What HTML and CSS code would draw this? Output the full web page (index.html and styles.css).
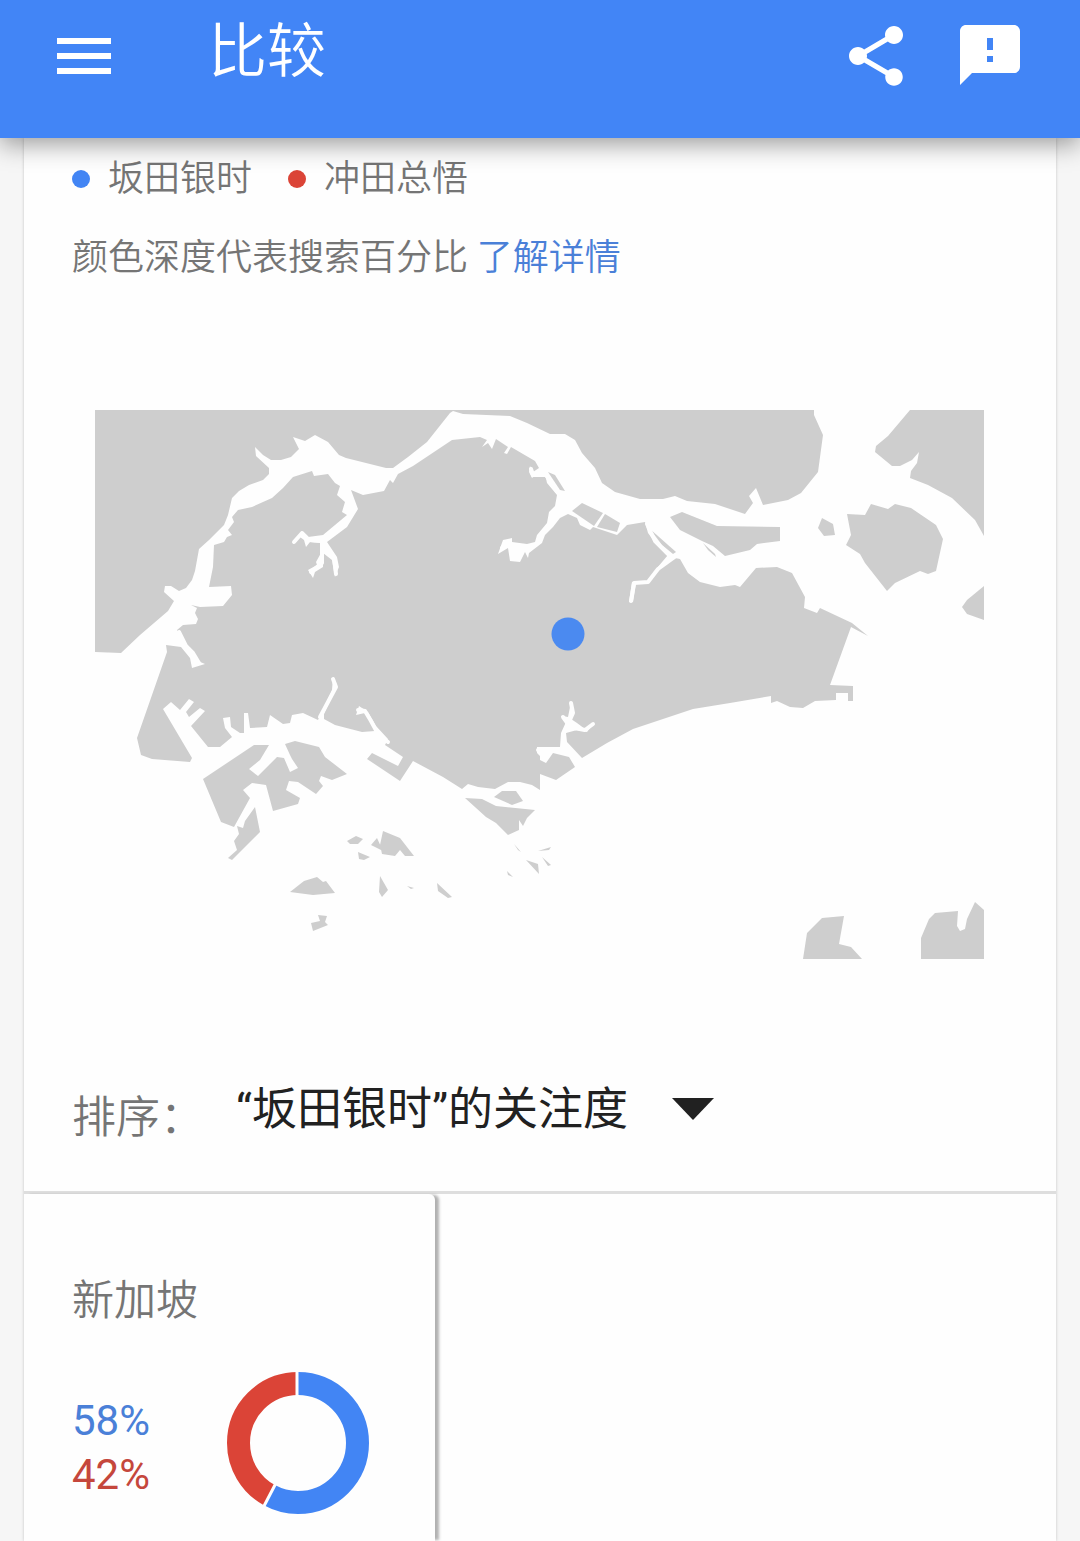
FILE: index.html
```html
<!DOCTYPE html>
<html lang="zh-CN">
<head>
<meta charset="utf-8">
<meta name="viewport" content="width=device-width, initial-scale=1">
<title>比较</title>
<link rel="stylesheet" href="styles.css">
</head>
<body>
<header class="app-bar">
  <button class="icon-button" type="button" aria-label="菜单">
    <svg class="icon" viewBox="0 0 24 24"><path d="M3 18h18v-2H3v2zm0-5h18v-2H3v2zm0-7v2h18V6H3z"/></svg>
  </button>
  <h1 class="app-title">比较</h1>
  <div class="app-actions">
    <button class="icon-button" type="button" aria-label="分享">
      <svg class="icon" viewBox="0 0 24 24"><path d="M18 16.08c-.76 0-1.44.3-1.96.77L8.91 12.7c.05-.23.09-.46.09-.7s-.04-.47-.09-.7l7.05-4.11c.54.5 1.25.81 2.04.81 1.66 0 3-1.34 3-3s-1.34-3-3-3-3 1.34-3 3c0 .24.04.47.09.7L8.04 9.81C7.5 9.31 6.79 9 6 9c-1.66 0-3 1.34-3 3s1.34 3 3 3c.79 0 1.5-.31 2.04-.81l7.12 4.16c-.05.21-.08.43-.08.65 0 1.61 1.31 2.92 2.92 2.92s2.92-1.31 2.92-2.92-1.31-2.92-2.92-2.92z"/></svg>
    </button>
    <button class="icon-button" type="button" aria-label="反馈">
      <svg class="icon" viewBox="0 0 24 24"><path d="M20 1.700H4c-1.100 0-2 .9-2 2V21.700l4-4h14c1.100 0 2-.9 2-2v-12c0-1.100-.9-2-2-2zM13 14h-2v-2h2v2zm0-4h-2V6h2v4z" fill-rule="evenodd"/></svg>
    </button>
  </div>
</header>

<main class="card">
  <section class="overview">
    <ul class="legend">
      <li class="legend-item"><span class="dot dot-blue"></span>坂田银时</li>
      <li class="legend-item"><span class="dot dot-red"></span>冲田总悟</li>
    </ul>
    <p class="note">颜色深度代表搜索百分比 <a class="note-link" href="#details">了解详情</a></p>
    <svg class="map" viewBox="95 410 890 549" role="img" aria-label="新加坡地图">
      <g class="land">
        <!-- Johor, north of the strait -->
        <path d="M95 410V652L121 653 140 635 168 611 174 601 164 592 165 586 171 586 179 591 186 588 192 580 195 571 199 549 209 540 224 525 228 515 232 498 239 491 249 485 263 480 269 474 269 468 256 456 255 447 263 455 271 460 281 460 291 457 299 449 293 437 305 441 315 435 328 442 339 455 346 458 366 463 386 468 393 468 408 457 427 442 450 413 453 411 463 414 510 416 527 423 550 434 565 434 575 440 582 453 595 468 602 483 615 492 640 499 663 499 675 496 687 501 715 504 745 514 753 503 749 496 756 488 763 505 788 500 801 493 818 472 823 435 814 415V410Z"/>
        <!-- Main island -->
        <path d="M209 587L213 567 214 545 224 542 227 537 232 535 228 530 234 522 232 517 238 510 252 507 272 498 283 488 293 477 312 471 314 476 328 474 335 483 340 486 337 495 345 502 342 512 347 515 323 535 308 537 302 531 293 543 300 537 304 540 306 547 310 542 320 543 321 553 316 562 317 565 308 570 313 578 315 572 323 567 323 553 332 560 335 577 339 567 337 557 327 542 347 527 358 509 351 490 363 495 384 491 390 480 393 483 398 474 413 466 452 440 480 437 487 440 482 447 488 443 492 449 496 439 508 447 504 453 507 454 511 447 535 461 539 468 533 472 530 466 529 472 532 478 537 474 545 474 547 483 557 495 555 506 549 512 547 523 537 535 535 542 527 544 512 542 512 538 503 540 498 554 508 548 510 561 520 562 525 552 528 558 529 553 542 543 545 535 553 527 560 518 568 514 577 518 580 525 590 530 593 527 617 535 627 525 645 522 648 533 657 545 668 555 657 568 647 582 632 582 629 602 633 602 636 584 649 583 658 570 675 558 680 559 688 573 700 582 720 587 735 585 740 587 756 568 777 567 792 573 805 597 804 608 817 613 820 608 852 623 868 636 851 627 830 685 853 686V701H848V693H836V700L815 701 803 708 790 707 777 701 771 703V696L730 703 693 709 633 729 607 743 582 758 567 742 566 733 577 730 587 732 594 723 585 729 577 723 571 719 573 713 571 702 568 717 562 716 566 722 561 733 560 747 537 747 537 753 540 756V790L532 785 520 782 508 782 495 789 478 787 468 784 462 789 443 777 413 761 400 781 367 759 372 753 398 766 403 757 385 745 388 739 376 726 368 712 359 706 356 715 365 713 375 731 362 732 335 725 324 719 324 714 337 685 333 677 332 690 318 720 303 713 292 715 290 723 283 724 270 715 267 727 250 728 248 713H244V733L240 733 231 727 230 717 223 718 225 728 232 737 220 747 208 747 191 726 205 711 200 708 189 717 186 712 194 702 189 699 180 710 171 702 163 709 192 758 190 762 152 759 141 755 137 738 167 652 166 645 181 647 190 658 192 668 205 664 198 661 192 652 185 645 177 630 183 625 196 624 198 619 195 613 197 608 191 605 200 607 223 606 232 595 231 586Z"/>
        <!-- Islands in the northern and eastern straits -->
        <path d="M572 511L582 503 603 513 594 526Z"/>
        <path d="M605 514L620 523 617 532 597 527Z"/>
        <path d="M548 472L555 475 565 491 560 490Z"/>
        <path d="M650 529L676 552 673 554 662 545Z"/>
        <path d="M670 517L682 512 717 526 780 527V541L757 544 750 550 725 556 713 546 702 541 680 530Z"/>
        <path d="M703 543L715 554 716 557 708 550Z"/>
        <path d="M822 518L833 524 835 535 824 536 818 528Z"/>
        <path d="M847 514L865 515 871 504 888 509 895 504 911 508 936 525 943 539 936 571 928 574 920 571 895 583 887 591 865 563 860 554 846 545 851 535Z"/>
        <path d="M910 410H984V536L975 520 952 498 928 485 910 478 911 471 917 463 919 452 912 460 900 466 892 466 875 452 876 446 888 436Z"/>
        <path d="M984 586V620L967 614 962 607 967 600Z"/>
        <!-- Jurong and the south-western islands -->
        <path d="M203 779L254 745 269 745 260 760 249 769 258 776 277 757 284 758 290 772 298 768 292 759 290 755 285 744 295 741 319 747 325 757 347 774 332 780 321 776 319 781 323 786 316 794 298 782 289 781 286 790 300 798 298 804 273 811 266 785 252 783 243 790 250 798 234 827 221 822Z"/>
        <path d="M255 807L260 832 232 860 228 858 237 850 234 841 239 834 237 826 243 828 245 821Z"/>
        <path d="M540 760L546 763 553 753 569 757 575 767 556 780 540 774Z"/>
        <path d="M494 797L502 791 516 791 523 801 512 805Z"/>
        <path d="M465 798L482 799 496 806 535 810 527 818 523 826 519 820 519 830 508 835 496 823 486 817Z"/>
        <path d="M347 841L356 836 363 839 358 844 350 844Z"/>
        <path d="M358 852L370 857 364 860 359 859ZM377 838L383 851 371 845ZM383 831L400 838 414 856 405 856 400 850 395 856 382 854 380 845Z"/>
        <path d="M290 892L304 881 317 877 323 882 326 881 335 893 313 895Z"/>
        <path d="M318 915L327 916 325 922 328 925 313 931 311 923 320 921Z"/>
        <path d="M380 876L388 890 382 897 379 892ZM407 886L414 888 411 889ZM437 883L452 897 448 898 438 891Z"/>
        <path d="M514 844L521 852 518 850ZM526 860L538 864 539 874ZM542 857L551 865 548 866ZM538 851L551 847 549 850ZM507 871L513 877 508 875Z"/>
        <!-- Batam shoreline -->
        <path d="M803 959L807 933 822 918 844 916 839 944 851 947 862 959Z"/>
        <path d="M921 959V938L929 919 935 913 958 911 957 926 960 931 965 929 967 919 975 902 984 910V959Z"/>
      </g>
      <!-- Rivers and reservoirs -->
      <g class="water">
        <path d="M647 524L655 541 669 555M676 556L658 569 648 582 634 583 631 601"/>
        <path d="M571 703L573 713 569 722M563 717L568 724 564 733 563 745 573 758M593 724L585 730 574 728"/>
        <path d="M538 750H560"/>
        <path d="M333 679L336 687 328 702 320 717"/>
        <path d="M358 710L365 711 371 721 378 734 388 742"/>
        <path d="M179 632L186 646 193 653 199 663"/>
        <path d="M294 542L302 533 309 540 322 541 322 563 311 572M324 548L334 558 336 574"/>
        <path d="M502 548L506 542 516 549 526 549M531 469L533 475 546 475 557 491"/>
      </g>
      <circle class="marker" cx="568" cy="634" r="16.5"/>
    </svg>
    <div class="sort">
      <label class="sort-label" for="sort-by">排序：</label>
      <div class="sort-field">
        <select class="sort-select" id="sort-by">
          <option>“坂田银时”的关注度</option>
          <option>“冲田总悟”的关注度</option>
        </select>
        <svg class="sort-arrow" viewBox="0 0 42 22" aria-hidden="true"><path d="M0 0H42L21 22Z"/></svg>
      </div>
    </div>
  </section>

  <section class="regions">
    <article class="region">
      <h2 class="region-name">新加坡</h2>
      <div class="region-data">
        <div class="shares">
          <span class="share-blue">58%</span>
          <span class="share-red">42%</span>
        </div>
        <svg class="donut" viewBox="0 0 144 144" role="img" aria-label="58% 与 42%">
          <circle class="ring ring-blue" cx="72" cy="72" r="59.5" pathLength="100" stroke-dasharray="58 42" transform="rotate(-90 72 72)"/>
          <circle class="ring ring-red" cx="72" cy="72" r="59.5" pathLength="100" stroke-dasharray="42 58" stroke-dashoffset="-58" transform="rotate(-90 72 72)"/>
          <path class="gap" d="M71 0V25M37 137L50 112"/>
        </svg>
      </div>
    </article>
  </section>
</main>
</body>
</html>
```

FILE: styles.css
```css
* {
  box-sizing: border-box;
}

body {
  display: flex;
  flex-direction: column;
  min-height: 100vh;
  margin: 0;
  background: #f6f6f6;
  color: #757575;
  font-family: Roboto, "Noto Sans CJK SC", sans-serif;
  font-weight: 350;
}

.app-bar {
  position: relative;
  z-index: 1;
  display: flex;
  align-items: flex-start;
  height: 138px;
  padding: 20px 54px 0 48px;
  background: #4285f6;
  box-shadow: 0 6px 24px rgba(0, 0, 0, 0.4);
  color: #fff;
}

.icon-button {
  display: block;
  width: 72px;
  height: 72px;
  padding: 0;
  border: 0;
  background: none;
  color: inherit;
}

.icon {
  display: block;
  width: 100%;
  height: 100%;
  fill: currentColor;
}

.app-title {
  flex: 1;
  margin: 0 0 0 88px;
  font-size: 59px;
  font-weight: inherit;
  line-height: 63px;
}

.app-actions {
  display: flex;
  gap: 42px;
}

.card {
  display: flex;
  flex: 1;
  flex-direction: column;
  margin: 0 24px;
  background: #fefefe;
  box-shadow: 0 0 3px rgba(0, 0, 0, 0.2);
}

.overview {
  padding: 17px 48px 40px;
  border-bottom: 3px solid #dedede;
}

.legend {
  display: flex;
  gap: 36px;
  margin: 0;
  padding: 0;
  list-style: none;
  font-size: 36px;
  line-height: 48px;
}

.legend-item {
  display: flex;
  align-items: center;
  gap: 18px;
}

.dot {
  width: 18px;
  height: 18px;
  border-radius: 50%;
}

.dot-blue {
  background: #4285f4;
}

.dot-red {
  background: #db4437;
}

.note {
  margin: 31px 0 0;
  font-size: 36px;
  line-height: 48px;
}

.note-link {
  color: #4a80d8;
  text-decoration: none;
}

.map {
  display: block;
  width: calc(100% - 46px);
  margin: 128px 23px 0;
}

.land {
  fill: #cecece;
}

.water {
  fill: none;
  stroke: #fefefe;
  stroke-width: 4;
  stroke-linecap: round;
  stroke-linejoin: round;
}

.marker {
  fill: #4b8af0;
}

.sort {
  display: flex;
  gap: 32px;
  margin-top: 118px;
}

.sort-label {
  padding-top: 8px;
  font-size: 44px;
  line-height: 66px;
}

.sort-field {
  position: relative;
}

.sort-select {
  appearance: none;
  display: block;
  height: 66px;
  padding: 0 86px 0 0;
  border: 0;
  background: none;
  color: #212121;
  font: inherit;
  font-size: 45px;
  font-weight: 400;
  line-height: 66px;
}

.sort-arrow {
  position: absolute;
  top: 21px;
  right: 0;
  width: 42px;
  height: 22px;
  fill: #212121;
  pointer-events: none;
}

.regions {
  display: flex;
  flex: 1;
}

.region {
  width: 39.8%;
  padding: 77px 48px 24px;
  border-top-right-radius: 6px;
  box-shadow: 5px 0 3px -1px rgba(0, 0, 0, 0.3);
}

.region-name {
  margin: 0;
  font-size: 42px;
  font-weight: inherit;
  line-height: 60px;
}

.region-data {
  display: flex;
  align-items: center;
  gap: 76px;
  margin-top: 40px;
}

.shares {
  display: flex;
  flex-direction: column;
  padding-top: 10px;
  font-size: 42px;
  font-weight: 400;
  line-height: 54px;
}

.share-blue {
  color: #4a80d8;
}

.share-red {
  color: #c5473c;
}

.donut {
  display: block;
  width: 144px;
  height: 144px;
}

.ring {
  fill: none;
  stroke-width: 23;
}

.ring-blue {
  stroke: #4285f4;
}

.ring-red {
  stroke: #db4437;
}

.gap {
  fill: none;
  stroke: #fefefe;
  stroke-width: 3;
}
```
